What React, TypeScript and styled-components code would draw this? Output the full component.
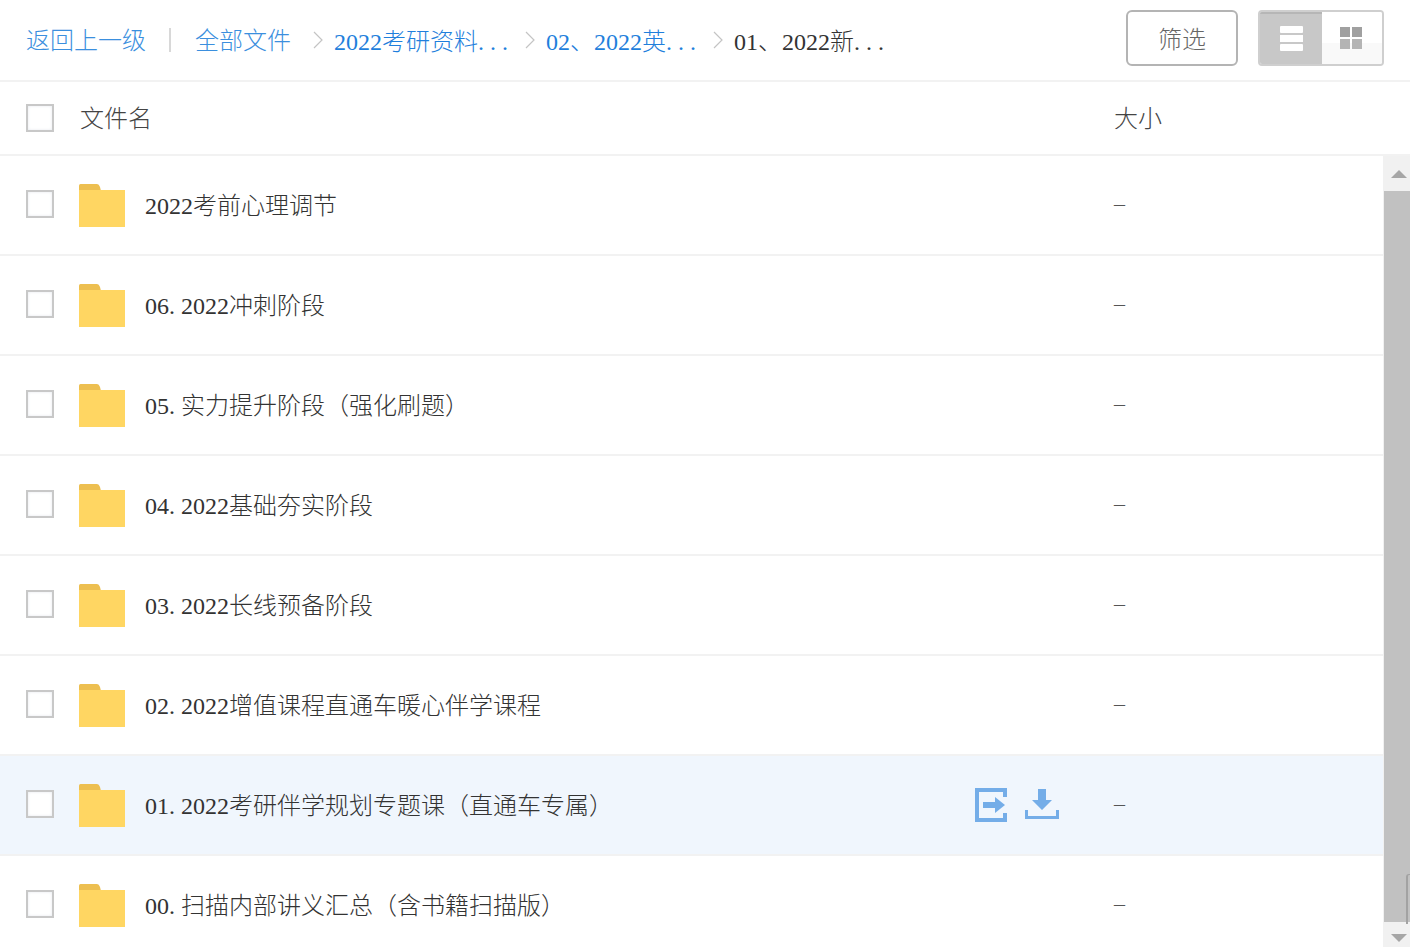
import React from 'react'
import styled, {createGlobalStyle} from 'styled-components'

const rows = [
  '2022考前心理调节',
  '06. 2022冲刺阶段',
  '05. 实力提升阶段（强化刷题）',
  '04. 2022基础夯实阶段',
  '03. 2022长线预备阶段',
  '02. 2022增值课程直通车暖心伴学课程',
  '01. 2022考研伴学规划专题课（直通车专属）',
  '00. 扫描内部讲义汇总（含书籍扫描版）',
]

const FolderIcon = () => (
  <FolderSvg width="46" height="43" viewBox="0 0 46 43">
    <path d="M0 1.5 Q0 0 1.5 0H18Q20 0 21 3L22 7H0Z" fill="#edbf50" />
    <rect x="0" y="6" width="46" height="37" fill="#ffd662" />
  </FolderSvg>
)

const Chevron = () => (
  <ChevronIcon width="10" height="18" viewBox="0 0 10 18">
    <path d="M1 1 L9 9 L1 17" fill="none" stroke="#c4c4c4" strokeWidth="1.2" />
  </ChevronIcon>
)

const MoveIcon = () => (
  <svg width="33" height="36" viewBox="0 0 33 36">
    <path d="M32 3H2V33H32" fill="none" stroke="#74ade8" strokeWidth="4" />
    <path d="M30 1v9M30 26v9" stroke="#74ade8" strokeWidth="4" />
    <path d="M8 15H20V10L30 18L20 26V21H8Z" fill="#74ade8" />
  </svg>
)

const DownloadIcon = () => (
  <svg width="34" height="31" viewBox="0 0 34 31">
    <path d="M13 0H21V11H27L17 21L7 11H13Z" fill="#74ade8" />
    <path d="M1.5 21V28.5H32.5V21" fill="none" stroke="#74ade8" strokeWidth="3" />
  </svg>
)

const ListIcon = () => (
  <svg width="23" height="25" viewBox="0 0 23 25">
    <rect x="0" y="0" width="23" height="7" rx="1" fill="#fff" />
    <rect x="0" y="9" width="23" height="7" fill="#fff" />
    <rect x="0" y="18" width="23" height="7" rx="1" fill="#fff" />
  </svg>
)

const GridIcon = () => (
  <GridBox>
    <GridCell $dark />
    <GridCell $dark />
    <GridCell />
    <GridCell />
  </GridBox>
)

export default function App() {
  return (
    <>
      <GlobalStyle />
      <Page>
        <TopBar>
          <Crumbs>
            <BackLink>返回上一级</BackLink>
            <Divider />
            <AllFiles>全部文件</AllFiles>
            <Chevron />
            <CrumbLink>
              2022考研资料<Dots>...</Dots>
            </CrumbLink>
            <Chevron />
            <CrumbLink>
              02、2022英<Dots>...</Dots>
            </CrumbLink>
            <Chevron />
            <CrumbCurrent>
              01、2022新<Dots>...</Dots>
            </CrumbCurrent>
          </Crumbs>
          <FilterButton>筛选</FilterButton>
          <ViewToggle>
            <ToggleActive>
              <ListIcon />
            </ToggleActive>
            <ToggleIdle>
              <GridIcon />
            </ToggleIdle>
          </ViewToggle>
        </TopBar>
        <HeaderRow>
          <CheckBox />
          <HeaderName>文件名</HeaderName>
          <HeaderSize>大小</HeaderSize>
        </HeaderRow>
        <Body>
          <List>
            {rows.map((name, idx) => (
              <Row key={name} $hover={idx === 6}>
                <CheckBox />
                <FolderBox>
                  <FolderIcon />
                </FolderBox>
                <FileName>{name}</FileName>
                {idx === 6 && (
                  <Actions>
                    <MoveIcon />
                    <DownloadIcon />
                  </Actions>
                )}
                <SizeCell>–</SizeCell>
              </Row>
            ))}
          </List>
          <ScrollBar>
            <ScrollEnd $height={35}>
              <ArrowUp />
            </ScrollEnd>
            <ScrollThumb />
            <ScrollEnd $height={25}>
              <ArrowDown />
            </ScrollEnd>
            <EdgeMark />
          </ScrollBar>
        </Body>
      </Page>
    </>
  )
}

const GlobalStyle = createGlobalStyle`
  html, body {
    margin: 0;
    padding: 0;
    background: #fff;
    overflow: hidden;
  }
  * {
    box-sizing: border-box;
  }
  body {
    font-family: 'Liberation Serif', 'Noto Sans CJK SC', serif;
  }
`

const Page = styled.div`
  width: 1410px;
  height: 947px;
  display: flex;
  flex-direction: column;
  overflow: hidden;
`

const TopBar = styled.div`
  height: 82px;
  flex: 0 0 auto;
  display: flex;
  align-items: flex-start;
  padding: 10px 26px 0 26px;
  border-bottom: 2px solid #f2f2f2;
`

const Crumbs = styled.div`
  flex: 1;
  height: 60px;
  display: flex;
  align-items: center;
  font-size: 24px;
  font-weight: 300;
  color: #333;
  white-space: nowrap;
`

const BackLink = styled.span`
  color: #3b8fde;
  margin-bottom: 4px;
`

const Divider = styled.span`
  width: 2px;
  height: 24px;
  background: #d8d8d8;
  margin: 0 24px 0 23px;
`

const AllFiles = styled.span`
  color: #3b8fde;
  margin-bottom: 4px;
  margin-right: 11px;
`

const ChevronIcon = styled.svg`
  margin: 0 11px;
  flex: 0 0 auto;
`

const CrumbLink = styled.span`
  color: #1f7fdc;
  margin-bottom: 2px;
`

const CrumbCurrent = styled.span`
  color: #333;
  margin-bottom: 2px;
`

const Dots = styled.span`
  letter-spacing: 6px;
`

const FilterButton = styled.div`
  width: 112px;
  height: 56px;
  border: 2px solid #b4b4b4;
  border-radius: 6px;
  display: flex;
  align-items: center;
  justify-content: center;
  padding-bottom: 2px;
  font-size: 24px;
  font-weight: 300;
  color: #666;
  margin-right: 20px;
`

const ViewToggle = styled.div`
  width: 126px;
  height: 56px;
  border: 2px solid #cfcfcf;
  border-radius: 4px;
  display: flex;
  overflow: hidden;
`

const ToggleActive = styled.div`
  width: 62px;
  background: #c8c8c8;
  box-shadow: inset 0 2px 0 #b6b6b6;
  display: flex;
  align-items: center;
  justify-content: center;
`

const ToggleIdle = styled.div`
  flex: 1;
  background: linear-gradient(#fff 60%, #f9f9f9 60%);
  display: flex;
  align-items: center;
  justify-content: center;
`

const GridBox = styled.div`
  display: grid;
  grid-template-columns: 10px 10px;
  grid-template-rows: 10px 10px;
  gap: 2px;
  margin-left: -2px;
`

const GridCell = styled.div<{$dark?: boolean}>`
  background: ${props => (props.$dark ? '#a0a0a0' : '#b4b4b4')};
`

const HeaderRow = styled.div`
  height: 74px;
  flex: 0 0 auto;
  display: flex;
  align-items: center;
  padding-left: 26px;
  border-bottom: 2px solid #f2f2f2;
`

const CheckBox = styled.div`
  width: 28px;
  height: 28px;
  flex: 0 0 auto;
  border: 2px solid #c8c8c8;
  box-shadow: inset 0 0 3px #e4e8ee;
  background: #fff;
`

const HeaderName = styled.span`
  margin-left: 26px;
  margin-bottom: 4px;
  flex: 1;
  font-size: 24px;
  font-weight: 300;
  color: #444;
`

const HeaderSize = styled.span`
  width: 296px;
  margin-bottom: 4px;
  font-size: 24px;
  font-weight: 300;
  color: #444;
`

const Body = styled.div`
  flex: 1;
  min-height: 0;
  display: flex;
`

const List = styled.div`
  flex: 1;
  min-width: 0;
  overflow: hidden;
`

const Row = styled.div<{$hover?: boolean}>`
  height: 100px;
  display: flex;
  align-items: center;
  padding: 0 0 2px 26px;
  background: ${props => (props.$hover ? '#f0f6fd' : '#fff')};
  border-bottom: 2px solid #f2f2f2;
`

const FolderBox = styled.div`
  width: 46px;
  height: 43px;
  margin-left: 25px;
  margin-top: 3px;
  flex: 0 0 auto;
`

const FolderSvg = styled.svg`
  display: block;
`

const FileName = styled.span`
  margin-left: 20px;
  margin-bottom: 2px;
  flex: 1;
  font-size: 24px;
  font-weight: 300;
  color: #333;
  white-space: nowrap;
`

const Actions = styled.div`
  display: flex;
  align-items: center;
  gap: 17px;
  margin-top: 1px;
  margin-right: 55px;
`

const SizeCell = styled.span`
  width: 269px;
  font-size: 22px;
  font-weight: 300;
  color: #555;
`

const ScrollBar = styled.div`
  position: relative;
  width: 27px;
  flex: 0 0 auto;
  display: flex;
  flex-direction: column;
  background: #f1f1f1;
`

const ScrollEnd = styled.div<{$height: number}>`
  height: ${props => props.$height}px;
  flex: 0 0 auto;
  display: flex;
  align-items: center;
  justify-content: center;
`

const ScrollThumb = styled.div`
  flex: 1;
  margin-left: 1px;
  background: #c1c1c1;
`

const ArrowUp = styled.div`
  width: 0;
  height: 0;
  border-left: 8px solid transparent;
  border-right: 8px solid transparent;
  border-bottom: 8px solid #a6a6a6;
  margin-left: 4px;
`

const ArrowDown = styled.div`
  width: 0;
  height: 0;
  border-left: 8px solid transparent;
  border-right: 8px solid transparent;
  border-top: 8px solid #a6a6a6;
  margin-left: 4px;
  margin-top: 6px;
`

const EdgeMark = styled.div`
  position: absolute;
  right: 0;
  top: 718px;
  width: 4px;
  height: 50px;
  border-left: 2px solid #a2a2a2;
  border-top: 1px solid #a2a2a2;
  border-top-left-radius: 3px;
`
